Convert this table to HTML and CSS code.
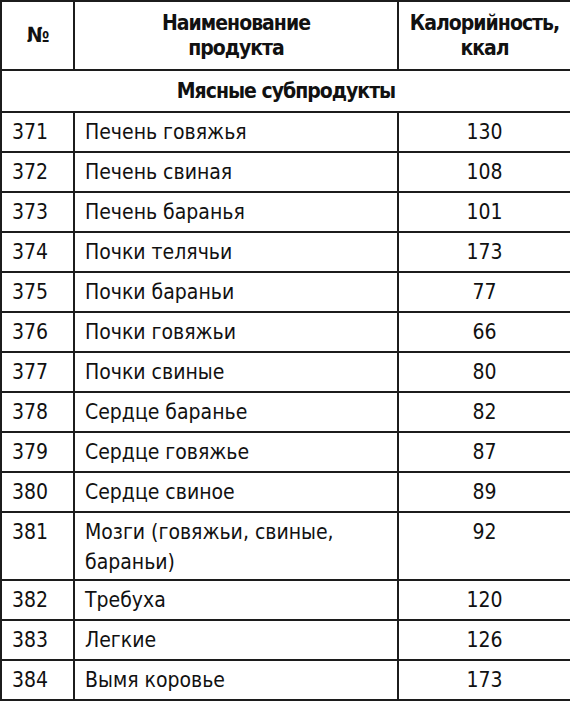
FILE: index.html
```html
<!DOCTYPE html>
<html lang="ru">
<head>
<meta charset="utf-8">
<link rel="stylesheet" href="styles.css">
</head>
<body>
<table class="calories">
  <colgroup>
    <col class="c-num">
    <col class="c-name">
    <col class="c-kcal">
  </colgroup>
  <thead>
    <tr class="head">
      <th>№</th>
      <th>Наименование<br>продукта</th>
      <th>Калорийность,<br>ккал</th>
    </tr>
  </thead>
  <tbody>
    <tr class="section"><td colspan="3">Мясные субпродукты</td></tr>
    <tr class="row"><td class="num">371</td><td class="name">Печень говяжья</td><td class="kcal">130</td></tr>
    <tr class="row"><td class="num">372</td><td class="name">Печень свиная</td><td class="kcal">108</td></tr>
    <tr class="row"><td class="num">373</td><td class="name">Печень баранья</td><td class="kcal">101</td></tr>
    <tr class="row"><td class="num">374</td><td class="name">Почки телячьи</td><td class="kcal">173</td></tr>
    <tr class="row"><td class="num">375</td><td class="name">Почки бараньи</td><td class="kcal">77</td></tr>
    <tr class="row"><td class="num">376</td><td class="name">Почки говяжьи</td><td class="kcal">66</td></tr>
    <tr class="row"><td class="num">377</td><td class="name">Почки свиные</td><td class="kcal">80</td></tr>
    <tr class="row"><td class="num">378</td><td class="name">Сердце баранье</td><td class="kcal">82</td></tr>
    <tr class="row"><td class="num">379</td><td class="name">Сердце говяжье</td><td class="kcal">87</td></tr>
    <tr class="row"><td class="num">380</td><td class="name">Сердце свиное</td><td class="kcal">89</td></tr>
    <tr class="row tall"><td class="num">381</td><td class="name">Мозги (говяжьи, свиные,<br>бараньи)</td><td class="kcal">92</td></tr>
    <tr class="row"><td class="num">382</td><td class="name">Требуха</td><td class="kcal">120</td></tr>
    <tr class="row"><td class="num">383</td><td class="name">Легкие</td><td class="kcal">126</td></tr>
    <tr class="row"><td class="num">384</td><td class="name">Вымя коровье</td><td class="kcal">173</td></tr>
  </tbody>
</table>
</body>
</html>
```
FILE: styles.css
```css
html, body {
  margin: 0;
  padding: 0;
  background: #fff;
}
body {
  font-family: "DejaVu Sans Condensed", "Liberation Sans", sans-serif;
  color: #111;
}
.calories {
  width: 570px;
  border-collapse: collapse;
  table-layout: fixed;
}
.c-num { width: 73px; }
.c-name { width: 324px; }
.c-kcal { width: 173px; }
.calories th,
.calories td {
  border: 2px solid #1c1c1c;
  padding: 0;
  font-size: 21px;
  line-height: 30px;
  vertical-align: middle;
}
.head th {
  height: 67px;
  font-weight: bold;
  line-height: 25px;
  letter-spacing: -1px;
  text-align: center;
}
.section td {
  height: 40px;
  font-weight: bold;
  letter-spacing: -1px;
  text-align: center;
}
.row td { height: 38px; }
.row.tall td {
  height: 62px;
  vertical-align: top;
  padding-top: 4px;
}
.num { padding-left: 10px !important; }
.name { padding-left: 10px !important; }
.kcal { text-align: center; }
```
